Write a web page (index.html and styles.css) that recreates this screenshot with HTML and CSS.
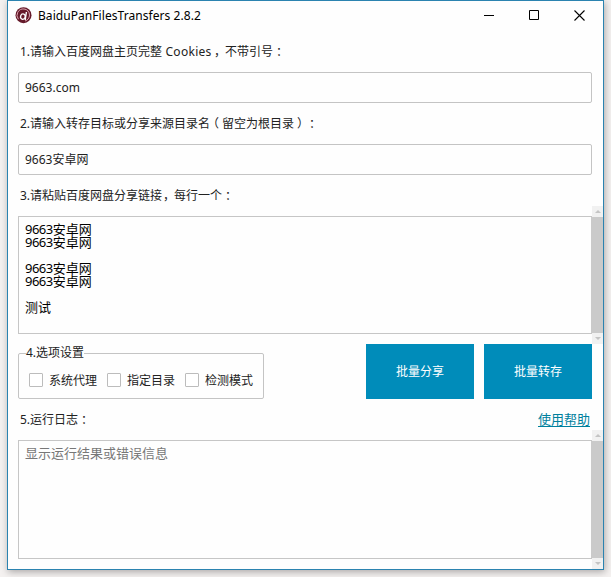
FILE: index.html
```html
<!DOCTYPE html>
<html lang="zh-CN">
<head>
<meta charset="utf-8">
<title>BaiduPanFilesTransfers 2.8.2</title>
<link rel="stylesheet" href="styles.css">
</head>
<body>
<main class="window">
  <header class="titlebar">
    <svg class="logo" width="17" height="17" viewBox="0 0 17 17" fill="none">
      <circle cx="8.5" cy="8.2" r="8" fill="#651a2a"/>
      <path d="M3.4 12.2A6.3 6.3 0 0 1 9 2c3.2.2 5.5 2.9 5.5 6 0 3-1.9 5.4-4.5 6" stroke="#d9a3ae" stroke-width="1"/>
      <ellipse cx="7.9" cy="9.6" rx="2.3" ry="2.7" transform="rotate(20 7.9 9.6)" stroke="#fff" stroke-width="1.3"/>
      <path d="M11.4 5l-1.2 8" stroke="#fff" stroke-width="1.4"/>
    </svg>
    <h1 class="title">BaiduPanFilesTransfers 2.8.2</h1>
    <div class="controls">
      <svg width="10" height="11" viewBox="0 0 10 11"><path d="M0 5.5h10" stroke="#000"/></svg>
      <svg width="10" height="11" viewBox="0 0 10 11"><path d="M.5.5h9v9h-9z" fill="none" stroke="#000"/></svg>
      <svg width="11" height="11" viewBox="0 0 11 11"><path d="M.5.5l10 10m0-10l-10 10" stroke="#000" stroke-width="1.1"/></svg>
    </div>
  </header>
  <div class="content">
    <div class="label"><span class="index">1.</span>请输入百度网盘主页完整<span class="latin"> Cookies</span><span class="comma">，</span>不带引号<span class="mid">：</span></div>
    <div class="input">9663.com</div>
    <div class="label"><span class="index">2.</span>请输入转存目标或分享来源目录名<span class="open">（</span>留空为根目录<span class="mid">）</span><span class="mid">：</span></div>
    <div class="input">9663安卓网</div>
    <div class="label"><span class="index">3.</span>请粘贴百度网盘分享链接<span class="comma">，</span>每行一个<span class="mid">：</span></div>
    <div class="textarea links"><span class="num">9663</span>安卓网
<span class="num">9663</span>安卓网

<span class="num">9663</span>安卓网
<span class="num">9663</span>安卓网

测试<div class="scrollbar"><i class="arrow up"></i><i class="thumb"></i><i class="arrow down"></i></div></div>
    <div class="actions">
      <div class="options">
        <div class="legend">4.选项设置</div>
        <div class="option"><i class="check"></i><span class="name">系统代理</span></div>
        <div class="option"><i class="check"></i><span class="name">指定目录</span></div>
        <div class="option"><i class="check"></i><span class="name">检测模式</span></div>
      </div>
      <div class="buttons">
        <div class="button">批量分享</div>
        <div class="button">批量转存</div>
      </div>
    </div>
    <div class="label log-label"><span><span class="index">5.</span>运行日志<span class="mid">：</span></span><a class="help">使用帮助</a></div>
    <div class="textarea log">显示运行结果或错误信息<div class="scrollbar"><i class="arrow up"></i><i class="thumb"></i><i class="arrow down"></i></div></div>
  </div>
</main>
</body>
</html>
```
FILE: styles.css
```css
* { box-sizing: border-box; }

body {
  margin: 0;
  height: 577px;
  overflow: hidden;
  background: #f4f1f0;
  font: 12px/16px "Noto Sans", "Noto Sans CJK SC", sans-serif;
  text-spacing-trim: space-all;
  color: #222;
}

.window {
  width: 597px;
  height: 570px;
  margin-left: 7px;
  border: 1px solid #2b83b0;
  background: #fefefe;
  box-shadow: 1px 2px 7px rgba(0, 0, 0, .3);
}

.titlebar {
  display: flex;
  align-items: center;
  height: 30px;
  padding: 0 18px 2px 7px;
}

.title {
  margin: 2px 0 0 6px;
  font-size: 12px;
  font-weight: 400;
  letter-spacing: .06px;
  color: #000;
  white-space: nowrap;
}

.controls {
  display: flex;
  gap: 35px;
  margin-left: auto;
}

.content { padding: 0 11px 0 10px; }

.label {
  display: flex;
  align-items: center;
  height: 41px;
  padding: 1px 0 0 2px;
  white-space: pre;
}

.index {
  display: inline-block;
  width: 10px;
}

.latin {
  width: 51px;
  letter-spacing: .3px;
}

/* Full-width punctuation sits in the middle of its cell. */
.mid {
  padding-left: 3px;
  margin-right: -3px;
}

.comma {
  padding-left: 1px;
  margin-right: -1px;
}

.open {
  margin-left: -3px;
  padding-right: 3px;
}

.input {
  height: 31px;
  padding: 7px 6px;
  border: 1px solid #c4c4c4;
  border-radius: 2px;
}

.textarea {
  position: relative;
  padding: 6px;
  border: 1px solid #c6c6c6;
  white-space: pre;
  font-size: 13px;
  line-height: 13px;
}

.links {
  height: 118px;
  color: #000;
}

.num { letter-spacing: -.5px; }

.log {
  height: 119px;
  color: #777;
}

.scrollbar {
  position: absolute;
  top: -11px;
  right: -12px;
  bottom: -11px;
  width: 12px;
  display: flex;
  flex-direction: column;
}

.arrow {
  display: flex;
  justify-content: center;
  align-items: center;
  height: 11px;
  margin-left: 1px;
  background: #f1f1f1;
}

.arrow::before {
  content: "";
  border: 3px solid transparent;
}

.up::before {
  border-top: 0;
  border-bottom-color: #c4c4c4;
}

.down::before {
  border-bottom: 0;
  border-top-color: #c4c4c4;
}

.thumb {
  flex: 1;
  background: #cacaca;
}

.actions {
  display: flex;
  justify-content: space-between;
  align-items: flex-end;
  height: 65px;
}

.options {
  position: relative;
  display: flex;
  align-items: center;
  gap: 9px;
  width: 246px;
  height: 46px;
  padding: 8px 0 0 10px;
  border: 1px solid #c4c4c4;
  border-radius: 2px;
}

.legend {
  position: absolute;
  top: -9px;
  left: 7px;
  background: #fefefe;
  white-space: nowrap;
}

.option {
  display: flex;
  align-items: center;
  gap: 6px;
  width: 69px;
  white-space: nowrap;
}

.name { padding-top: 2px; }

.check {
  flex: none;
  width: 14px;
  height: 14px;
  border: 1px solid #bcbcbc;
  border-radius: 1px;
  background: #fff;
}

.buttons {
  display: flex;
  gap: 10px;
}

.button {
  display: flex;
  align-items: center;
  justify-content: center;
  width: 108px;
  height: 55px;
  padding-top: 1px;
  background: #008cba;
  color: #fff;
}

.log-label {
  justify-content: space-between;
  padding-right: 2px;
}

.help {
  padding-bottom: 3px;
  color: #00809d;
  font-size: 13px;
  text-decoration: underline;
  text-underline-offset: 2px;
}
```
